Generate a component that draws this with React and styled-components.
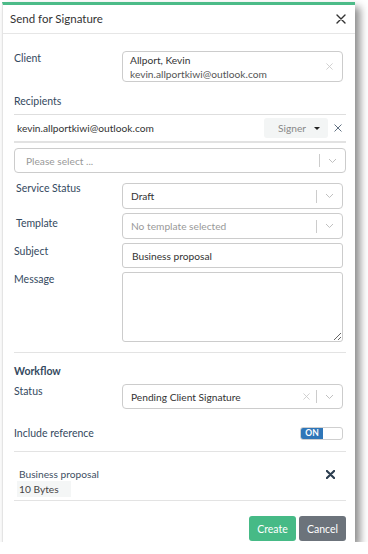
import React from "react";
import styled, { createGlobalStyle } from "styled-components";

const GlobalStyle = createGlobalStyle`
  html, body {
    margin: 0;
    padding: 0;
    background: #ffffff;
  }
  body {
    font-family: Lato, "Open Sans", sans-serif;
    font-size: 10.2px;
    color: #333333;
  }
  * { box-sizing: border-box; }
`;

const Page = styled.div`
  padding: 2px 0 0 2px;
`;

const Dialog = styled.div`
  width: 353px;
  background: #ffffff;
  border-top: 3px solid #4cbb88;
  border-left: 1px solid #e4e4e4;
  box-shadow: 5px 5px 8px rgba(0, 0, 0, 0.45);
`;

const Header = styled.div`
  height: 29px;
  display: flex;
  align-items: center;
  justify-content: space-between;
  padding: 0 9px 0 7px;
  border-bottom: 1px solid #e6e6e6;
`;

const Title = styled.div`
  font-size: 11.5px;
  color: #333;
  margin-top: -2px;
`;

const Body = styled.div`
  padding: 17px 9px 0 11px;
`;

const FormRow = styled.div`
  display: grid;
  grid-template-columns: 108px 1fr;
  align-items: start;
  padding-right: 3px;
  margin-top: ${(p) => p.$gap || 0}px;
`;

const Label = styled.div`
  line-height: 14px;
  font-size: 10.5px;
  color: #34495e;
  padding-left: ${(p) => p.$indent || 0}px;
  margin-top: ${(p) => p.$shift || 0}px;
  font-weight: ${(p) => (p.$bold ? 700 : 400)};
`;

const SectionLabel = styled(Label)`
  margin-top: ${(p) => p.$gap || 0}px;
`;

const ClientBox = styled.div`
  height: 31px;
  border: 1px solid #cccccc;
  border-radius: 4px;
  display: flex;
  align-items: center;
  justify-content: space-between;
  padding: 0 9px 0 7px;
`;

const ClientLines = styled.div`
  display: flex;
  flex-direction: column;
  line-height: 14px;
`;

const Email = styled.span`
  color: #555;
`;

const Recipients = styled.div`
  margin-top: 6px;
  border-top: 1px solid #dedede;
  border-bottom: 2px solid #e2e2e2;
`;

const RecipientRow = styled.div`
  height: 26px;
  display: flex;
  align-items: center;
  padding: 0 4px 0 3px;
`;

const RecipientEmail = styled.div`
  flex: 1;
  color: #333;
`;

const RolePill = styled.div`
  width: 64px;
  height: 20px;
  background: #f3f5f5;
  border-radius: 3px;
  display: flex;
  align-items: center;
  justify-content: space-between;
  padding: 0 8px 0 14px;
  color: #888;
`;

const Caret = styled.span`
  width: 0;
  height: 0;
  border-left: 3px solid transparent;
  border-right: 3px solid transparent;
  border-top: 3px solid #222;
`;

const RemoveButton = styled.span`
  display: flex;
  margin-left: 6px;
  color: #5a6b7c;
`;

const Select = styled.div`
  height: ${(p) => p.$h || 26}px;
  border: 1px solid #cccccc;
  border-radius: 4px;
  display: flex;
  align-items: center;
  margin-top: ${(p) => p.$gap || 0}px;
  padding-left: ${(p) => p.$pad || 8}px;
`;

const SelectValue = styled.div`
  flex: 1;
  color: ${(p) => (p.$placeholder ? "#999" : "#333")};
  white-space: nowrap;
`;

const Indicators = styled.div`
  display: flex;
  align-items: center;
  height: 100%;
`;

const ClearIcon = styled.span`
  display: flex;
  padding: ${(p) => (p.$bare ? "0" : "0 6px")};
  color: #c8c8c8;
`;

const Divider = styled.span`
  width: 1px;
  height: 13px;
  background: #cccccc;
`;

const Chevron = styled.span`
  display: flex;
  padding: 0 8px 0 8px;
  color: #c0c0c0;
`;

const TextInput = styled.input`
  height: 25px;
  width: 100%;
  border: 1px solid #cccccc;
  border-radius: 3px;
  padding: 0 9px;
  font: inherit;
  color: #333;
  outline: none;
`;

const TextArea = styled.textarea`
  display: block;
  height: 70px;
  width: 100%;
  border: 1px solid #cccccc;
  border-radius: 3px;
  font: inherit;
  resize: vertical;
  outline: none;
`;

const Separator = styled.div`
  height: 1px;
  background: #e3e3e3;
  margin-top: ${(p) => p.$gap || 0}px;
`;

const ToggleRow = styled.div`
  display: flex;
  align-items: center;
  justify-content: space-between;
  margin-top: 17px;
  padding-right: 3px;
`;

const Toggle = styled.div`
  width: 43px;
  height: 13px;
  border: 1px solid #cfcfcf;
  border-radius: 3px;
  display: flex;
  overflow: hidden;
`;

const ToggleOn = styled.div`
  width: 22px;
  background: #2f76b8;
  color: #fff;
  font-size: 8.5px;
  font-weight: 700;
  display: flex;
  align-items: center;
  justify-content: center;
  line-height: 1;
`;

const Attachment = styled.div`
  display: flex;
  justify-content: space-between;
  align-items: flex-start;
  padding: 15px 11px 3px 3px;
  border-bottom: 1px solid #e3e3e3;
`;

const FileInfo = styled.div`
  display: flex;
  flex-direction: column;
  align-items: flex-start;
`;

const FileName = styled.div`
  line-height: 14px;
  color: #3e4f63;
  padding-left: 2px;
`;

const FileSize = styled.div`
  line-height: 16px;
  background: #f4f6f6;
  color: #444;
  padding: 0 12px 0 2px;
`;

const BoldClose = styled.span`
  display: flex;
  margin-top: 3px;
  color: #2c3e50;
`;

const Footer = styled.div`
  display: flex;
  justify-content: flex-end;
  gap: 3px;
  padding: 15px 0 1px;
`;

const Button = styled.button`
  width: 47px;
  height: 25px;
  border: none;
  border-radius: 3px;
  font: inherit;
  font-size: 10.5px;
  color: #fff;
  background: ${(p) => (p.$variant === "primary" ? "#46ba86" : "#6c737b")};
`;

const CloseButton = styled.span`
  display: flex;
  color: #333;
`;

const XIcon = ({ size = 8, stroke = 1.2 }) => (
  <svg width={size} height={size} viewBox="0 0 10 10">
    <path d="M1 1 L9 9 M9 1 L1 9" stroke="currentColor" strokeWidth={stroke} fill="none" strokeLinecap="round" />
  </svg>
);

const ChevronIcon = () => (
  <svg width="9" height="6" viewBox="0 0 9 6">
    <path d="M1 1 L4.5 4.5 L8 1" stroke="currentColor" strokeWidth="1" fill="none" />
  </svg>
);

const DropIndicators = ({ clearable }) => (
  <Indicators>
    {clearable && (
      <ClearIcon>
        <XIcon size={7} stroke={1.2} />
      </ClearIcon>
    )}
    <Divider />
    <Chevron>
      <ChevronIcon />
    </Chevron>
  </Indicators>
);

export default function App() {
  return (
    <Page>
      <GlobalStyle />
      <Dialog>
        <Header>
          <Title>Send for Signature</Title>
          <CloseButton>
            <XIcon size={10} stroke={1.4} />
          </CloseButton>
        </Header>
        <Body>
          <FormRow>
            <Label>Client</Label>
            <ClientBox>
              <ClientLines>
                <span>Allport, Kevin</span>
                <Email>kevin.allportkiwi@outlook.com</Email>
              </ClientLines>
              <ClearIcon $bare>
                <XIcon size={7} />
              </ClearIcon>
            </ClientBox>
          </FormRow>

          <SectionLabel $gap={12}>Recipients</SectionLabel>
          <Recipients>
            <RecipientRow>
              <RecipientEmail>kevin.allportkiwi@outlook.com</RecipientEmail>
              <RolePill>
                Signer
                <Caret />
              </RolePill>
              <RemoveButton>
                <XIcon size={8} />
              </RemoveButton>
            </RecipientRow>
          </Recipients>

          <Select $gap={5} $h={25} $pad={11}>
            <SelectValue $placeholder>Please select ...</SelectValue>
            <DropIndicators />
          </Select>

          <FormRow $gap={10}>
            <Label $indent={2} $shift={-2}>Service Status</Label>
            <Select>
              <SelectValue>Draft</SelectValue>
              <DropIndicators />
            </Select>
          </FormRow>

          <FormRow $gap={4}>
            <Label $indent={2} $shift={3}>Template</Label>
            <Select>
              <SelectValue $placeholder>No template selected</SelectValue>
              <DropIndicators />
            </Select>
          </FormRow>

          <FormRow $gap={4}>
            <Label $shift={1}>Subject</Label>
            <TextInput defaultValue="Business proposal" />
          </FormRow>

          <FormRow $gap={4}>
            <Label>Message</Label>
            <TextArea />
          </FormRow>

          <Separator $gap={10} />

          <SectionLabel $gap={11} $bold>
            Workflow
          </SectionLabel>

          <FormRow $gap={6}>
            <Label>Status</Label>
            <Select $h={25}>
              <SelectValue>Pending Client Signature</SelectValue>
              <DropIndicators clearable />
            </Select>
          </FormRow>

          <ToggleRow>
            <Label>Include reference</Label>
            <Toggle>
              <ToggleOn>ON</ToggleOn>
            </Toggle>
          </ToggleRow>

          <Separator $gap={11} />

          <Attachment>
            <FileInfo>
              <FileName>Business proposal</FileName>
              <FileSize>10 Bytes</FileSize>
            </FileInfo>
            <BoldClose>
              <XIcon size={9} stroke={2.4} />
            </BoldClose>
          </Attachment>

          <Footer>
            <Button $variant="primary">Create</Button>
            <Button>Cancel</Button>
          </Footer>
        </Body>
      </Dialog>
    </Page>
  );
}
